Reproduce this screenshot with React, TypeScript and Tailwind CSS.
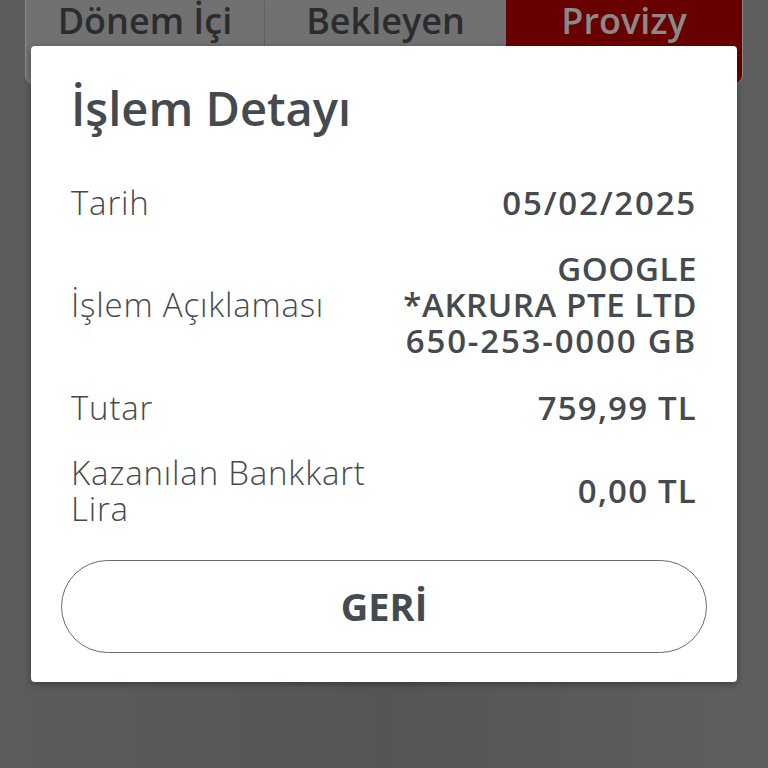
export default function App() {
  const font = { fontFamily: '"Open Sans", "Liberation Sans", sans-serif' };

  return (
    <div
      className="relative h-[768px] w-[768px] overflow-hidden bg-gradient-to-r from-[#5b5c5d] via-[#545556] to-[#5e5f60]"
      style={font}
    >
      {/* dimmed tabs behind the dialog */}
      <div className="mx-[25px] mt-[-12px] flex h-[97px] overflow-hidden rounded-b-[10px] border border-[#8a8a8a] bg-[#717171]">
        <div className="flex w-[238px] flex-col items-center pt-[11px] text-[36px] leading-[42px] font-semibold text-[#2a2c2e]">
          <span>Dönem İçi</span>
          <span>Harcamalar</span>
        </div>
        <div className="my-[12px] w-px bg-[#5e5e5e]" />
        <div className="flex w-[241px] flex-col items-center pt-[11px] text-[36px] leading-[42px] font-semibold text-[#2a2c2e]">
          <span>Bekleyen</span>
          <span>Talimatlar</span>
        </div>
        <div className="flex flex-1 flex-col items-center bg-[#690000] pt-[11px] text-[36px] leading-[42px] font-semibold text-[#8a8a8a]">
          <span>Provizy</span>
          <span>onlar</span>
        </div>
      </div>

      {/* dialog */}
      <div className="absolute left-[31px] top-[46px] flex w-[706px] flex-col rounded-[4px] bg-white px-[40px] pb-[29px] pt-[31px] text-[#454a4f] shadow-[0_2px_6px_rgba(0,0,0,0.35)]">
        <h2 className="text-[47px] leading-[62px] font-semibold">İşlem Detayı</h2>

        <div className="mt-[46px] flex items-center justify-between text-[33px] leading-[36px]">
          <span className="font-light tracking-[0.8px]">Tarih</span>
          <span className="font-semibold tracking-[1.8px]">05/02/2025</span>
        </div>

        <div className="mt-[30px] flex items-center justify-between text-[33px] leading-[36px]">
          <span className="font-light tracking-[0.8px]">İşlem Açıklaması</span>
          <span className="flex flex-col items-end font-semibold">
            <span className="tracking-[0.6px]">GOOGLE</span>
            <span className="tracking-[0.6px]">*AKRURA PTE LTD</span>
            <span className="tracking-[1.8px]">650-253-0000 GB</span>
          </span>
        </div>

        <div className="mt-[31px] flex items-center justify-between text-[33px] leading-[36px]">
          <span className="font-light tracking-[0.8px]">Tutar</span>
          <span className="font-semibold tracking-[1.2px]">759,99 TL</span>
        </div>

        <div className="mt-[29px] flex items-center justify-between text-[33px] leading-[36px]">
          <span className="font-light tracking-[0.8px]">
            Kazanılan Bankkart
            <br />
            Lira
          </span>
          <span className="font-semibold tracking-[1.2px]">0,00 TL</span>
        </div>

        <button className="mx-[-10px] mt-[33px] h-[93px] rounded-full border border-[#6b6b6b] text-[38px] font-bold text-[#454a4f]">
          GERİ
        </button>
      </div>
    </div>
  );
}
